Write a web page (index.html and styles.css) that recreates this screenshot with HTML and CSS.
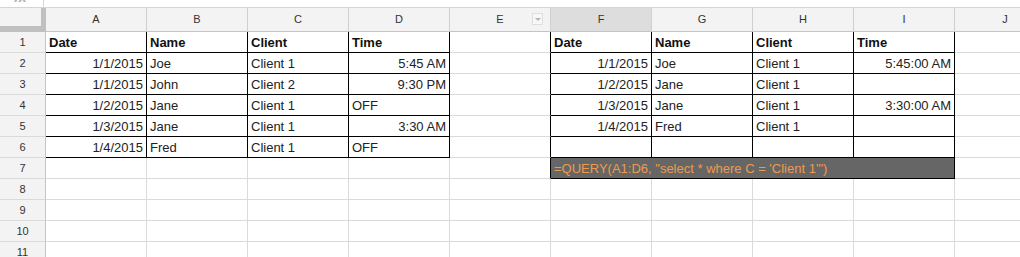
FILE: index.html
```html
<html>
<head>
<meta charset="utf-8">
<link rel="stylesheet" href="styles.css">
</head>
<body>
	<div class="topbar">
		<div class="fxbox"><span class="fx">fx</span></div>
	</div>
	<div class="sheet">
		<div class="corner"></div>
		<div class="ch">A</div>
		<div class="ch">B</div>
		<div class="ch">C</div>
		<div class="ch">D</div>
		<div class="ch menu">E<span class="drop"></span></div>
		<div class="ch sel">F</div>
		<div class="ch">G</div>
		<div class="ch">H</div>
		<div class="ch">I</div>
		<div class="ch">J</div>

		<div class="rh">1</div>
		<div class="c bx hd">Date</div>
		<div class="c bx hd">Name</div>
		<div class="c bx hd">Client</div>
		<div class="c bx hd">Time</div>
		<div class="c edge"></div>
		<div class="c bx hd">Date</div>
		<div class="c bx hd">Name</div>
		<div class="c bx hd">Client</div>
		<div class="c bx hd">Time</div>
		<div class="c"></div>

		<div class="rh">2</div>
		<div class="c bx num">1/1/2015</div>
		<div class="c bx">Joe</div>
		<div class="c bx">Client 1</div>
		<div class="c bx num">5:45 AM</div>
		<div class="c edge"></div>
		<div class="c bx num">1/1/2015</div>
		<div class="c bx">Joe</div>
		<div class="c bx">Client 1</div>
		<div class="c bx num">5:45:00 AM</div>
		<div class="c"></div>

		<div class="rh">3</div>
		<div class="c bx num">1/1/2015</div>
		<div class="c bx">John</div>
		<div class="c bx">Client 2</div>
		<div class="c bx num">9:30 PM</div>
		<div class="c edge"></div>
		<div class="c bx num">1/2/2015</div>
		<div class="c bx">Jane</div>
		<div class="c bx">Client 1</div>
		<div class="c bx"></div>
		<div class="c"></div>

		<div class="rh">4</div>
		<div class="c bx num">1/2/2015</div>
		<div class="c bx">Jane</div>
		<div class="c bx">Client 1</div>
		<div class="c bx">OFF</div>
		<div class="c edge"></div>
		<div class="c bx num">1/3/2015</div>
		<div class="c bx">Jane</div>
		<div class="c bx">Client 1</div>
		<div class="c bx num">3:30:00 AM</div>
		<div class="c"></div>

		<div class="rh">5</div>
		<div class="c bx num">1/3/2015</div>
		<div class="c bx">Jane</div>
		<div class="c bx">Client 1</div>
		<div class="c bx num">3:30 AM</div>
		<div class="c edge"></div>
		<div class="c bx num">1/4/2015</div>
		<div class="c bx">Fred</div>
		<div class="c bx">Client 1</div>
		<div class="c bx"></div>
		<div class="c"></div>

		<div class="rh">6</div>
		<div class="c bx num">1/4/2015</div>
		<div class="c bx">Fred</div>
		<div class="c bx">Client 1</div>
		<div class="c bx">OFF</div>
		<div class="c edge"></div>
		<div class="c bx"></div>
		<div class="c bx"></div>
		<div class="c bx"></div>
		<div class="c bx"></div>
		<div class="c"></div>

		<div class="rh">7</div>
		<div class="c"></div>
		<div class="c"></div>
		<div class="c"></div>
		<div class="c"></div>
		<div class="c edge"></div>
		<div class="c bx formula">=QUERY(A1:D6, "select * where C = 'Client 1'")</div>
		<div class="c"></div>

		<div class="rh">8</div>
		<div class="c"></div><div class="c"></div><div class="c"></div><div class="c"></div><div class="c"></div>
		<div class="c"></div><div class="c"></div><div class="c"></div><div class="c"></div><div class="c"></div>

		<div class="rh">9</div>
		<div class="c"></div><div class="c"></div><div class="c"></div><div class="c"></div><div class="c"></div>
		<div class="c"></div><div class="c"></div><div class="c"></div><div class="c"></div><div class="c"></div>

		<div class="rh">10</div>
		<div class="c"></div><div class="c"></div><div class="c"></div><div class="c"></div><div class="c"></div>
		<div class="c"></div><div class="c"></div><div class="c"></div><div class="c"></div><div class="c"></div>

		<div class="rh">11</div>
		<div class="c"></div><div class="c"></div><div class="c"></div><div class="c"></div><div class="c"></div>
		<div class="c"></div><div class="c"></div><div class="c"></div><div class="c"></div><div class="c"></div>
	</div>
</body>
</html>
```

FILE: styles.css
```css
body {
	margin: 0;
	width: 1020px;
	height: 257px;
	overflow: hidden;
	background: #fff;
	font-family: "Liberation Sans", Arial, sans-serif;
	color: #222;
}

.topbar {
	height: 7px;
	border-bottom: 1px solid #d4d4d4;
	overflow: hidden;
}

.fxbox {
	width: 43px;
	height: 7px;
	border-right: 1px solid #d4d4d4;
	overflow: hidden;
}

.fx {
	display: block;
	margin: -10px 0 0 14px;
	font-size: 14px;
	font-style: italic;
	font-weight: bold;
	color: #b0b0b0;
	line-height: 14px;
}

.sheet {
	display: grid;
	grid-template-columns: 46px repeat(10, 101px);
	grid-template-rows: 24px repeat(11, 21px);
	width: 1056px;
}

.corner {
	box-sizing: border-box;
	background: #f3f3f3;
	border-right: 5px solid #c0c0c0;
	border-bottom: 6px solid #c0c0c0;
}

.ch {
	position: relative;
	box-sizing: border-box;
	background: #f3f3f3;
	border-right: 1px solid #d0d0d0;
	border-bottom: 1px solid #c4c4c4;
	text-align: center;
	font-size: 11px;
	line-height: 23px;
	color: #333;
}

.ch.sel {
	background: #dddddd;
}

.drop {
	position: absolute;
	top: 5px;
	right: 7px;
	width: 9px;
	height: 10px;
	border: 1px solid #dedede;
	background: #f7f7f7;
}

.drop:after {
	content: "";
	position: absolute;
	top: 4px;
	left: 2px;
	border-left: 3px solid transparent;
	border-right: 3px solid transparent;
	border-top: 3px solid #b5b5b5;
}

.rh {
	box-sizing: border-box;
	background: #f3f3f3;
	border-right: 1px solid #c4c4c4;
	border-bottom: 1px solid #dadada;
	text-align: center;
	font-size: 11px;
	line-height: 21px;
	color: #333;
}

.c {
	box-sizing: border-box;
	border-right: 1px solid #dadada;
	border-bottom: 1px solid #dadada;
	padding: 0 3px;
	font-size: 13px;
	line-height: 21px;
	white-space: nowrap;
	overflow: hidden;
}

.bx {
	border-right-color: #000;
	border-bottom-color: #000;
}

.edge {
	border-right-color: #000;
}

.hd {
	font-weight: bold;
	color: #111;
}

.num {
	text-align: right;
}

.formula {
	grid-column: span 4;
	background: #666666;
	color: #ee9a4d;
}
```
